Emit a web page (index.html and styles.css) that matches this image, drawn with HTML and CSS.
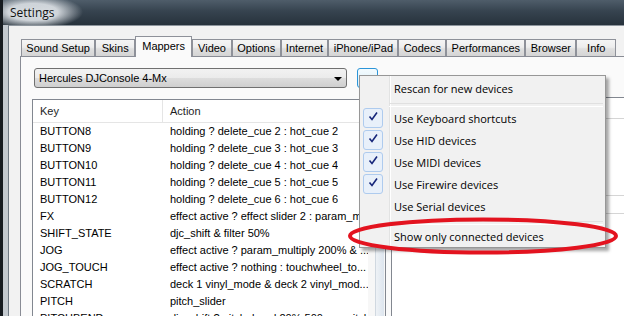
FILE: index.html
```html
<!DOCTYPE html>
<html lang="en">
<head>
    <meta charset="UTF-8">
    <title>Settings</title>
    <link rel="stylesheet" href="styles.css">
</head>
<body>
    <div class="window">
        <div class="titlebar"><span class="title">Settings</span></div>

        <div class="frame">
            <div class="client">
                <div class="tabs">
                    <div class="tab">Sound Setup</div>
                    <div class="tab">Skins</div>
                    <div class="tab active">Mappers</div>
                    <div class="tab">Video</div>
                    <div class="tab">Options</div>
                    <div class="tab">Internet</div>
                    <div class="tab">iPhone/iPad</div>
                    <div class="tab">Codecs</div>
                    <div class="tab">Performances</div>
                    <div class="tab">Browser</div>
                    <div class="tab">Info</div>
                </div>

                <div class="panel">
                    <div class="toolbar">
                        <div class="combo">
                            <span>Hercules DJConsole 4-Mx</span>
                            <span class="combo-arrow"></span>
                        </div>
                        <div class="menu-btn"></div>
                    </div>

                    <div class="content">
                        <div class="list">
                            <div class="list-body">
                                <div class="list-head">
                                    <div class="key">Key</div>
                                    <div class="action">Action</div>
                                </div>
                                <div class="row"><div class="key">BUTTON8</div><div class="action">holding ? delete_cue 2 : hot_cue 2</div></div>
                                <div class="row"><div class="key">BUTTON9</div><div class="action">holding ? delete_cue 3 : hot_cue 3</div></div>
                                <div class="row"><div class="key">BUTTON10</div><div class="action">holding ? delete_cue 4 : hot_cue 4</div></div>
                                <div class="row"><div class="key">BUTTON11</div><div class="action">holding ? delete_cue 5 : hot_cue 5</div></div>
                                <div class="row"><div class="key">BUTTON12</div><div class="action">holding ? delete_cue 6 : hot_cue 6</div></div>
                                <div class="row"><div class="key">FX</div><div class="action">effect active ? effect slider 2 : param_m...</div></div>
                                <div class="row"><div class="key">SHIFT_STATE</div><div class="action">djc_shift &amp; filter 50%</div></div>
                                <div class="row"><div class="key">JOG</div><div class="action">effect active ? param_multiply 200% &amp; ...</div></div>
                                <div class="row"><div class="key">JOG_TOUCH</div><div class="action">effect active ? nothing : touchwheel_to...</div></div>
                                <div class="row"><div class="key">SCRATCH</div><div class="action">deck 1 vinyl_mode &amp; deck 2 vinyl_mod...</div></div>
                                <div class="row"><div class="key">PITCH</div><div class="action">pitch_slider</div></div>
                                <div class="row"><div class="key">PITCHBEND</div><div class="action">djc_shift ? pitch_bend 20% 500ms : pitch_b...</div></div>
                            </div>
                            <div class="scrollbar"><div class="thumb"></div></div>
                        </div>

                        <div class="side">
                            <div class="side-head"></div>
                            <div class="side-gap"></div>
                            <div class="side-box"></div>
                        </div>
                    </div>
                </div>
            </div>
        </div>

        <div class="popup">
            <div class="item"><span class="mark"></span>Rescan for new devices</div>
            <div class="sep"></div>
            <div class="item"><span class="mark on"><svg viewBox="0 0 18 18" width="18" height="18"><path d="M5.5 7.5 L8 10.5 L13 3.5" /></svg></span>Use Keyboard shortcuts</div>
            <div class="item"><span class="mark on"><svg viewBox="0 0 18 18" width="18" height="18"><path d="M5.5 7.5 L8 10.5 L13 3.5" /></svg></span>Use HID devices</div>
            <div class="item"><span class="mark on"><svg viewBox="0 0 18 18" width="18" height="18"><path d="M5.5 7.5 L8 10.5 L13 3.5" /></svg></span>Use MIDI devices</div>
            <div class="item"><span class="mark on"><svg viewBox="0 0 18 18" width="18" height="18"><path d="M5.5 7.5 L8 10.5 L13 3.5" /></svg></span>Use Firewire devices</div>
            <div class="item"><span class="mark"></span>Use Serial devices</div>
            <div class="sep"></div>
            <div class="item"><span class="mark"></span>Show only connected devices</div>
        </div>

        <!-- hand drawn highlight round the last menu entry -->
        <svg class="circle" viewBox="0 0 280 44" width="280" height="44">
            <ellipse cx="137" cy="22" rx="133" ry="16.5" />
        </svg>
    </div>
</body>
</html>
```

FILE: styles.css
```css
* {
    margin: 0;
    padding: 0;
    box-sizing: border-box;
}

body {
    width: 624px;
    height: 316px;
    overflow: hidden;
    background: #14191e;
    font-family: "Liberation Sans", Arial, sans-serif;
    font-size: 11px;
    color: #000;
}

.window {
    position: relative;
    height: 316px;
    border-left: 3px solid #161b20;
    display: flex;
    flex-direction: column;
}

.titlebar {
    height: 25px;
    flex-shrink: 0;
    display: flex;
    align-items: center;
    padding-left: 7px;
    background:
        radial-gradient(ellipse 50px 17px at 30px 12px, rgba(214,219,224,0.95) 50%, rgba(214,219,224,0) 100%),
        linear-gradient(to bottom, #4f5d6a 0%, #36434f 45%, #27323c 100%);
}

.title {
    font-family: "Open Sans", sans-serif;
    font-size: 12px;
    color: #111;
    text-shadow: 0 0 6px rgba(255,255,255,0.8);
}

.frame {
    flex: 1;
    min-height: 0;
    display: flex;
    padding-left: 5px;
    background: #c3c9cf;
}

.client {
    flex: 1;
    min-height: 0;
    display: flex;
    flex-direction: column;
    padding-top: 10px;
    background: #f2f2f2;
    border-left: 1px solid #707a84;
    border-top: 1px solid #8d959d;
}

/* tab strip */
.tabs {
    display: flex;
    align-items: flex-end;
    height: 20px;
    margin-left: 12px;
    position: relative;
    z-index: 1;
}

.tab {
    height: 17px;
    line-height: 16px;
    padding: 0 4.3px;
    min-width: 40px;
    text-align: center;
    white-space: nowrap;
    border: 1px solid #8e9199;
    border-bottom: none;
    background: linear-gradient(#f5f5f5, #ededed 45%, #dfdfdf 55%, #d4d4d4);
}

.tab.active {
    height: 21px;
    line-height: 18px;
    padding: 0 6px;
    margin-bottom: -1px;
    background: #fafafa;
}

.panel {
    flex: 1;
    min-height: 0;
    margin-left: 11px;
    background: #fafafa;
    border: 1px solid #898c95;
    border-right: none;
    border-bottom: none;
}

.toolbar {
    display: flex;
    padding: 11px 0 0 13px;
}

.combo {
    width: 313px;
    height: 20px;
    display: flex;
    align-items: center;
    padding: 0 4px;
    border: 1px solid #707070;
    border-radius: 3px;
    background: linear-gradient(#f2f2f2, #ebebeb 50%, #dddddd 50%, #cfcfcf);
}

.combo-arrow {
    margin-left: auto;
    margin-top: 1px;
    border-left: 4px solid transparent;
    border-right: 4px solid transparent;
    border-top: 4px solid #000;
}

.menu-btn {
    width: 21px;
    height: 20px;
    margin-left: 10px;
    border: 1px solid #2c95d8;
    border-radius: 3px;
    background: linear-gradient(#f4fbfe, #d9effb);
}

.content {
    display: flex;
    align-items: flex-start;
    padding: 11px 0 0 11px;
}

/* key / action list */
.list {
    width: 354px;
    height: 240px;
    display: flex;
    background: #fff;
    border: 1px solid #828790;
}

.list-body {
    flex: 1;
    overflow: hidden;
}

.list-head {
    height: 23px;
    display: flex;
    border-bottom: 1px solid #e5e5e5;
    color: #1e1e1e;
}

.list-head .key,
.list-head .action {
    display: flex;
    align-items: center;
}

.list-head .key {
    border-right: 1px solid #e5e5e5;
}

.key {
    width: 130px;
    flex-shrink: 0;
    padding-left: 7px;
}

.action {
    padding-left: 7px;
    white-space: nowrap;
    overflow: hidden;
}

.row {
    display: flex;
    height: 17px;
    line-height: 17px;
    white-space: nowrap;
}

.scrollbar {
    width: 17px;
    padding: 18px 1px 0;
    background: #f7f7f7;
}

.thumb {
    height: 200px;
    margin-left: 6px;
    border-left: 1px solid #d0d8e0;
    background: linear-gradient(to right, #eef2f6, #dde5ee);
}

.side {
    flex: 1;
    height: 240px;
    margin: -2px 0 0 5px;
    background: #fff;
    border: 1px solid #828790;
    border-right: none;
}

.side-head {
    height: 21px;
    border-bottom: 1px solid #d5d5d5;
}

.side-gap {
    height: 76px;
}

.side-box {
    height: 19px;
    border-top: 1px solid #d5d5d5;
    border-bottom: 1px solid #d5d5d5;
}

/* drop down menu */
.popup {
    position: absolute;
    left: 356px;
    top: 75px;
    width: 247px;
    padding: 1px 2px 0;
    font-family: "Open Sans", sans-serif;
    font-size: 11px;
    border: 1px solid #979797;
    background:
        linear-gradient(to right, transparent 29px, #e2e3e3 29px, #e2e3e3 30px, #fff 30px, #fff 31px, transparent 31px),
        #f1f1f1;
    box-shadow: 3px 3px 3px rgba(0,0,0,0.35);
}

.item {
    height: 22px;
    display: flex;
    align-items: center;
    white-space: nowrap;
}

.mark {
    width: 20px;
    height: 20px;
    margin: 0 11px 0 1px;
    flex-shrink: 0;
}

.mark.on {
    border: 1px solid #aecbee;
    border-radius: 3px;
    background: #e8f0fa;
}

.mark svg {
    display: block;
}

.mark path {
    fill: none;
    stroke: #16267a;
    stroke-width: 1.6;
}

.sep {
    height: 8px;
    padding-top: 4px;
    margin-left: 27px;
}

.sep::before {
    content: "";
    display: block;
    height: 2px;
    border-top: 1px solid #e0e0e0;
    border-bottom: 1px solid #fff;
}

.circle {
    position: absolute;
    left: 343px;
    top: 214px;
    z-index: 2;
}

.circle ellipse {
    fill: none;
    stroke: #e3131f;
    stroke-width: 4;
}
```
